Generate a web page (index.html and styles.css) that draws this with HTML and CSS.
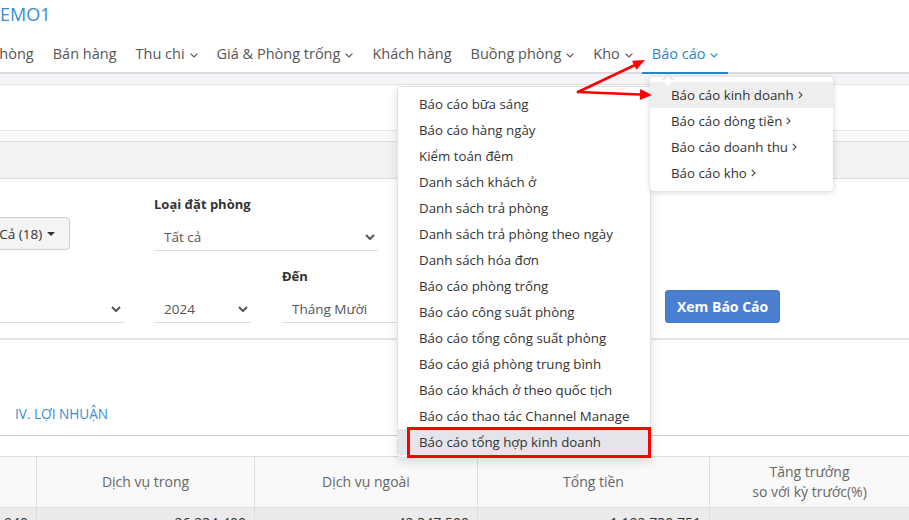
FILE: index.html
```html
<!DOCTYPE html>
<html lang="vi">
<head>
<meta charset="utf-8">
<title>DEMO1 - Báo cáo</title>
<link rel="stylesheet" href="styles.css">
</head>
<body>
<div class="app">
  <header class="topbar">
    <div class="brand">DEMO1</div>
    <nav class="mainnav">
      <a class="nav-item">Sơ đồ phòng</a>
      <a class="nav-item">Bán hàng</a>
      <a class="nav-item">Thu chi <svg class="caret" viewBox="0 0 8 5"><polyline points="0.6,0.6 4,4 7.4,0.6"/></svg></a>
      <a class="nav-item">Giá &amp; Phòng trống <svg class="caret" viewBox="0 0 8 5"><polyline points="0.6,0.6 4,4 7.4,0.6"/></svg></a>
      <a class="nav-item">Khách hàng</a>
      <a class="nav-item">Buồng phòng <svg class="caret" viewBox="0 0 8 5"><polyline points="0.6,0.6 4,4 7.4,0.6"/></svg></a>
      <a class="nav-item">Kho <svg class="caret" viewBox="0 0 8 5"><polyline points="0.6,0.6 4,4 7.4,0.6"/></svg></a>
      <a class="nav-item active">Báo cáo <svg class="caret" viewBox="0 0 8 5"><polyline points="0.6,0.6 4,4 7.4,0.6"/></svg></a>
    </nav>
  </header>

  <div class="strip"></div>
  <div class="titlebar"></div>
  <div class="spacer"></div>

  <section class="panel">
    <div class="panel-head"></div>
    <div class="panel-body">
      <div class="form-row row1">
        <div class="field w163">
          <button class="btn-default">Tất Cả (18) <span class="tri"></span></button>
        </div>
        <div class="field w224">
          <label>Loại đặt phòng</label>
          <div class="select"><span>Tất cả</span><svg class="chev" viewBox="0 0 10 6"><polyline points="1,1 5,5 9,1"/></svg></div>
        </div>
      </div>
      <div class="form-row row2">
        <div class="field w244">
          <label>Từ</label>
          <div class="select"><span>Tháng Chín</span><svg class="chev" viewBox="0 0 10 6"><polyline points="1,1 5,5 9,1"/></svg></div>
        </div>
        <div class="field w97">
          <label>&nbsp;</label>
          <div class="select"><span>2024</span><svg class="chev" viewBox="0 0 10 6"><polyline points="1,1 5,5 9,1"/></svg></div>
        </div>
        <div class="field w128 g31">
          <label>Đến</label>
          <div class="select"><span>Tháng Mười</span><svg class="chev" viewBox="0 0 10 6"><polyline points="1,1 5,5 9,1"/></svg></div>
        </div>
        <div class="field w97">
          <label>&nbsp;</label>
          <div class="select"><span>2024</span><svg class="chev" viewBox="0 0 10 6"><polyline points="1,1 5,5 9,1"/></svg></div>
        </div>
        <div class="btn-cell">
          <button class="btn-primary">Xem Báo Cáo</button>
        </div>
      </div>
    </div>
  </section>

  <section class="tabs">
    <span class="tab">IV. LỢI NHUẬN</span>
  </section>

  <table class="report">
    <colgroup>
      <col class="c0"><col class="c1"><col class="c2"><col class="c3"><col class="c4">
    </colgroup>
    <thead>
      <tr>
        <th></th>
        <th>Dịch vụ trong</th>
        <th>Dịch vụ ngoài</th>
        <th>Tổng tiền</th>
        <th>Tăng trưởng<br>so với kỳ trước(%)</th>
      </tr>
    </thead>
    <tbody>
      <tr>
        <td>1.035.940</td>
        <td>26.234.400</td>
        <td>42.347.500</td>
        <td>1.192.730.751</td>
        <td></td>
      </tr>
    </tbody>
  </table>

  <div class="notch"></div>

  <ul class="dropdown">
    <li>Báo cáo bữa sáng</li>
    <li>Báo cáo hàng ngày</li>
    <li>Kiểm toán đêm</li>
    <li>Danh sách khách ở</li>
    <li>Danh sách trả phòng</li>
    <li>Danh sách trả phòng theo ngày</li>
    <li>Danh sách hóa đơn</li>
    <li>Báo cáo phòng trống</li>
    <li>Báo cáo công suất phòng</li>
    <li>Báo cáo tổng công suất phòng</li>
    <li>Báo cáo giá phòng trung bình</li>
    <li>Báo cáo khách ở theo quốc tịch</li>
    <li>Báo cáo thao tác Channel Manage</li>
    <li class="hl">Báo cáo tổng hợp kinh doanh</li>
  </ul>

  <ul class="submenu">
    <li class="hl">Báo cáo kinh doanh <svg class="sub-chev" viewBox="0 0 5 8"><polyline points="0.8,0.8 4,4 0.8,7.2"/></svg></li>
    <li>Báo cáo dòng tiền <svg class="sub-chev" viewBox="0 0 5 8"><polyline points="0.8,0.8 4,4 0.8,7.2"/></svg></li>
    <li>Báo cáo doanh thu <svg class="sub-chev" viewBox="0 0 5 8"><polyline points="0.8,0.8 4,4 0.8,7.2"/></svg></li>
    <li>Báo cáo kho <svg class="sub-chev" viewBox="0 0 5 8"><polyline points="0.8,0.8 4,4 0.8,7.2"/></svg></li>
  </ul>

  <div class="red-box"></div>

  <svg class="arrows" viewBox="0 0 909 520">
    <line x1="578" y1="92" x2="635" y2="65" />
    <polygon points="645,60 636.4,69.7 632,60.7" />
    <line x1="578" y1="92" x2="640" y2="94.5" />
    <polygon points="652,95 639.8,100 640.2,89" />
  </svg>
</div>
</body>
</html>
```

FILE: styles.css
```css
* { box-sizing: border-box; }

html, body {
  margin: 0;
  padding: 0;
}

body {
  width: 909px;
  height: 520px;
  overflow: hidden;
  background: #fff;
  font-family: "Open Sans", "Noto Sans", sans-serif;
  color: #333;
}

.app {
  position: relative;
  width: 909px;
  height: 520px;
  overflow: hidden;
}

/* ---------- header ---------- */
.topbar {
  background: #fff;
  border-bottom: 2px solid #dcdcdc;
}

.brand {
  height: 28px;
  line-height: 28px;
  font-size: 18px;
  color: #3a8dd0;
  margin-left: -13px;
  white-space: nowrap;
}

.mainnav {
  display: flex;
  margin-top: 16px;
  margin-left: -61px;
  margin-bottom: -2px;
}

.nav-item {
  display: flex;
  align-items: center;
  gap: 5px;
  padding: 0 9.5px 8px;
  line-height: 20px;
  font-size: 14.5px;
  color: #555;
  white-space: nowrap;
  border-bottom: 2px solid transparent;
}

.nav-item.active {
  color: #2a85c8;
  border-bottom-color: #2a85c8;
}

.caret {
  width: 8px;
  height: 5px;
  margin-top: 2px;
  fill: none;
  stroke: currentColor;
  stroke-width: 1.2;
}

/* ---------- page bands ---------- */
.strip {
  height: 10px;
  background: #f4f5f8;
}

.titlebar {
  height: 47px;
  background: #fff;
  border-top: 1px solid #e4e4e4;
  border-bottom: 1px solid #e4e4e4;
}

.spacer {
  height: 10px;
  background: #fafafa;
}

.panel-head {
  height: 38px;
  background: #f2f2f2;
  border-top: 1px solid #ddd;
  border-bottom: 1px solid #ddd;
}

.panel-body {
  padding: 15px 0 15px;
  border-bottom: 2px solid #e3e3e3;
}

.form-row {
  display: flex;
  align-items: flex-end;
  gap: 30px;
}

.row1 { margin-left: -39px; }
.row2 { margin-left: -120px; margin-top: 15px; }

.field {
  display: flex;
  flex-direction: column;
  gap: 7px;
}

.w163 { width: 163px; }
.w224 { width: 224px; }
.w244 { width: 244px; }
.w97 { width: 97px; }
.w128 { width: 128px; }
.g31 { margin-left: 1px; }

.field label {
  font-weight: 700;
  font-size: 13px;
  line-height: 20px;
  color: #333;
  white-space: nowrap;
}

.select {
  height: 30px;
  padding: 2px 3px 0 10px;
  border-bottom: 1px solid #ddd;
  display: flex;
  align-items: center;
  justify-content: space-between;
  font-size: 13.5px;
  color: #555;
  white-space: nowrap;
}

.chev {
  width: 10px;
  height: 6px;
  flex: none;
  fill: none;
  stroke: #555;
  stroke-width: 2;
}

.btn-default {
  align-self: flex-start;
  height: 33px;
  margin-bottom: 1px;
  padding: 0 14px;
  display: flex;
  align-items: center;
  gap: 5px;
  border: 1px solid #ccc;
  border-radius: 4px;
  background: #f4f4f4;
  font-family: inherit;
  font-size: 13.5px;
  color: #333;
  white-space: nowrap;
}

.tri {
  width: 0;
  height: 0;
  border-left: 4px solid transparent;
  border-right: 4px solid transparent;
  border-top: 4px solid #333;
}

.btn-cell {
  margin-left: 98px;
}

.btn-primary {
  height: 33px;
  padding: 0 11px;
  border: 1px solid #4579c9;
  border-radius: 3px;
  background: #4a7fd0;
  color: #fff;
  font-family: inherit;
  font-weight: 700;
  font-size: 14px;
  white-space: nowrap;
}

/* ---------- tabs ---------- */
.tabs {
  display: flex;
  padding-top: 64px;
  border-bottom: 1px solid #cfcfcf;
}

.tab {
  padding: 0 15px 11px;
  line-height: 20px;
  font-size: 13.6px;
  color: #3a8dd0;
}

/* ---------- table ---------- */
.report {
  margin-top: 20px;
  margin-left: -60px;
  width: 969px;
  table-layout: fixed;
  border-collapse: collapse;
  font-size: 14px;
}

.c0 { width: 96px; }
.c1 { width: 218px; }
.c2 { width: 223px; }
.c3 { width: 232px; }
.c4 { width: 200px; }

.report th {
  height: 50px;
  padding: 5px 8px;
  background: #f9f9f9;
  border: 1px solid #ddd;
  font-weight: 400;
  line-height: 20px;
  color: #666;
  text-align: center;
}

.report td {
  padding: 5px 8px;
  background: #ebebeb;
  border: 1px solid #ddd;
  line-height: 20px;
  color: #333;
  text-align: right;
}

/* ---------- dropdown menus ---------- */
.dropdown,
.submenu {
  list-style: none;
  margin: 0;
  position: absolute;
  background: #fff;
  font-size: 13.3px;
  color: #333;
}

.dropdown {
  top: 86px;
  left: 397px;
  width: 254px;
  padding: 4px 0 2px;
  border: 1px solid #e2e2e2;
  border-radius: 0 0 4px 4px;
  box-shadow: 0 4px 10px rgba(0, 0, 0, 0.12);
}

.dropdown li {
  line-height: 26px;
  padding-left: 21px;
  white-space: nowrap;
}

.dropdown li.hl {
  background: #e4e5ea;
}

.submenu {
  top: 77px;
  left: 650px;
  width: 183px;
  padding: 5px 0;
  border-radius: 4px;
  box-shadow: 0 1px 6px rgba(0, 0, 0, 0.18);
}

.submenu li {
  display: flex;
  align-items: center;
  gap: 4px;
  height: 26px;
  padding-left: 21px;
  white-space: nowrap;
}

.submenu li.hl {
  background: #eeeeee;
}

.sub-chev {
  width: 5px;
  height: 8px;
  fill: none;
  stroke: #444;
  stroke-width: 1.1;
}

.notch {
  position: absolute;
  top: 76px;
  left: 664px;
  width: 8px;
  height: 8px;
  background: #fff;
  border-top: 1px solid #d8d8d8;
  border-left: 1px solid #d8d8d8;
  transform: rotate(45deg);
  z-index: 2;
}

/* ---------- annotations ---------- */
.red-box {
  position: absolute;
  top: 427px;
  left: 407px;
  width: 244px;
  height: 31px;
  border: 3px solid #f00;
}

.arrows {
  position: absolute;
  top: 0;
  left: 0;
  width: 909px;
  height: 520px;
  pointer-events: none;
}

.arrows line {
  stroke: #f00;
  stroke-width: 2.6;
  stroke-linecap: round;
}

.arrows polygon {
  fill: #f00;
}
```
